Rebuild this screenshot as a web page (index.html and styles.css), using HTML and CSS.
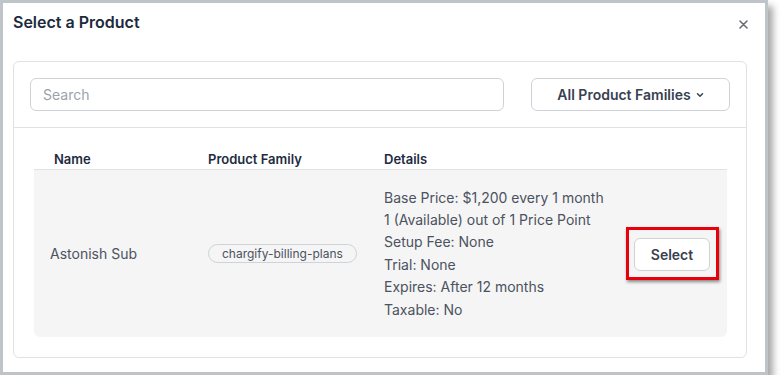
FILE: index.html
```html
<!DOCTYPE html>
<html>
<head>
	<meta charset="UTF-8">
	<title>Select a Product</title>
	<link rel="stylesheet" href="styles.css">
</head>
<body>
	<div class="frame">
		<div class="modal-head">
			<h1>Select a Product</h1>
			<button class="close" aria-label="Close">
				<svg width="9" height="9" viewBox="0 0 9 9"><path d="M1 1L8 8M8 1L1 8" stroke="#6b6f75" stroke-width="1.6" stroke-linecap="round"/></svg>
			</button>
		</div>
		<div class="card">
			<div class="toolbar">
				<input class="search" type="text" placeholder="Search">
				<button class="btn families">All Product Families
					<svg width="8" height="6" viewBox="0 0 8 6"><path d="M1.5 1.8L4 4.2L6.5 1.8" fill="none" stroke="#374151" stroke-width="1.5" stroke-linecap="round" stroke-linejoin="round"/></svg>
				</button>
			</div>
			<div class="table">
				<div class="row head">
					<div class="cell name">Name</div>
					<div class="cell">Product Family</div>
					<div class="cell">Details</div>
					<div class="cell"></div>
				</div>
				<div class="row item">
					<div class="cell name">Astonish Sub</div>
					<div class="cell"><span class="pill">chargify-billing-plans</span></div>
					<div class="cell details">
						<div>Base Price: $1,200 every 1 month</div>
						<div>1 (Available) out of 1 Price Point</div>
						<div>Setup Fee: None</div>
						<div>Trial: None</div>
						<div>Expires: After 12 months</div>
						<div>Taxable: No</div>
					</div>
					<div class="cell action">
						<span class="highlight"><button class="btn select">Select</button></span>
					</div>
				</div>
			</div>
		</div>
	</div>
</body>
</html>
```

FILE: styles.css
```css
html, body { margin: 0; padding: 0; background: #fff; }
body { font-family: Inter, "Noto Sans", sans-serif; color: #4b5260; }

.frame {
	box-sizing: border-box;
	width: 768px;
	height: 375px;
	border: 3px solid #bfc4c8;
	background: #fff;
	box-shadow: 5px 6px 7px rgba(0, 0, 0, 0.35);
	display: flex;
	flex-direction: column;
}

.modal-head { display: flex; justify-content: space-between; align-items: flex-start; padding: 9px 17px 0 10px; height: 49px; box-sizing: border-box; }
.modal-head h1 { margin: 0; font-size: 16px; line-height: 21px; font-weight: 600; color: #1c2a3d; }
.close { border: none; background: none; padding: 0; margin-top: 8px; width: 9px; height: 9px; cursor: pointer; display: block; }
.close svg { display: block; }

.card {
	margin: 9px 18px 14px 10px;
	border: 1px solid #dfe1e4;
	border-radius: 6px;
	flex: 1;
	display: flex;
	flex-direction: column;
}

.toolbar { display: flex; gap: 27px; padding: 16px; border-bottom: 1px solid #dfe1e4; }
.search {
	box-sizing: border-box;
	width: 474px;
	height: 33px;
	border: 1px solid #cfd3d8;
	border-radius: 6px;
	padding: 0 12px;
	font-family: inherit;
	font-size: 14px;
	color: #333;
	outline: none;
}
.search::placeholder { color: #9ca2ab; }

.btn {
	box-sizing: border-box;
	height: 33px;
	border: 1px solid #cfd3d8;
	border-radius: 6px;
	background: #fff;
	font-family: inherit;
	font-size: 14px;
	font-weight: 600;
	color: #374151;
	cursor: pointer;
}
.families { flex: 1; display: flex; align-items: center; justify-content: center; gap: 5px; padding: 0 12px; }
.families svg { display: block; margin-top: 1px; }

.table { padding: 22px 19px 20px 20px; }
.row { display: grid; grid-template-columns: 174px 176px 1fr auto; align-items: center; }
.head { font-size: 13px; line-height: 18px; font-weight: 600; color: #1e2b40; padding-bottom: 1px; border-bottom: 1px solid #e0e2e5; }
.head .name { padding-left: 20px; }
.item { background: #f5f5f5; border-radius: 0 0 6px 6px; padding: 17px 0 16px; font-size: 14px; }
.item .name { padding-left: 16px; }
.details { line-height: 22.4px; }
.pill {
	display: inline-block;
	border: 1px solid #cfd3d8;
	border-radius: 10px;
	padding: 0 13px;
	font-size: 12px;
	line-height: 17px;
	color: #4b5260;
}
.action { padding-right: 8px; }
.highlight {
	display: inline-block;
	border: 3px solid #e8000b;
	padding: 8px 6px 6px 5px;
	box-shadow: 1px 2px 3px rgba(0, 0, 0, 0.45);
}
.highlight .btn { display: block; width: 76px; }
```
